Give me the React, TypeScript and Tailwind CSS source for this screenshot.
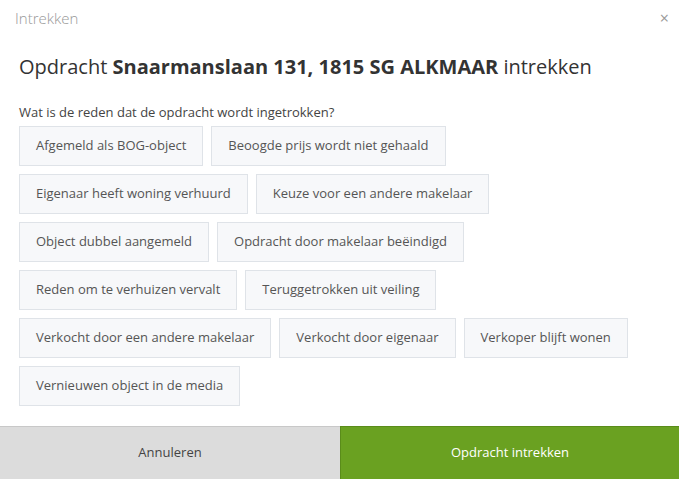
import React from "react";

const reasons = [
  "Afgemeld als BOG-object",
  "Beoogde prijs wordt niet gehaald",
  "Eigenaar heeft woning verhuurd",
  "Keuze voor een andere makelaar",
  "Object dubbel aangemeld",
  "Opdracht door makelaar beëindigd",
  "Reden om te verhuizen vervalt",
  "Teruggetrokken uit veiling",
  "Verkocht door een andere makelaar",
  "Verkocht door eigenaar",
  "Verkoper blijft wonen",
  "Vernieuwen object in de media",
];

export default function App() {
  return (
    <div
      className="w-[679px] h-[479px] bg-white flex flex-col"
      style={{ fontFamily: '"Open Sans", sans-serif' }}
    >
      <div className="flex items-center justify-between pl-[15px] pr-[10px] h-[36px]">
        <span className="text-[15px] text-[#999] font-light">Intrekken</span>
        <span className="text-[16px] text-[#999] leading-none">×</span>
      </div>
      <div className="flex-1 px-[19px]">
        <h1 className="text-[20px] text-[#333] mt-[16px] leading-[30px]">
          Opdracht <b className="font-bold">Snaarmanslaan 131, 1815 SG ALKMAAR</b> intrekken
        </h1>
        <p className="text-[13px] text-[#444] mt-[21px] leading-[18px]">
          Wat is de reden dat de opdracht wordt ingetrokken?
        </p>
        <div className="flex flex-wrap gap-[8px] mt-[5px]">
          {reasons.map((r) => (
            <div
              key={r}
              className="h-[40px] px-[16px] flex items-center bg-[#f7f8fa] border border-[#dfe3e8] text-[13px] text-[#555]"
            >
              {r}
            </div>
          ))}
        </div>
      </div>
      <div className="flex h-[53px]">
        <div className="w-[340px] bg-[#dcdcdc] border-t border-[#c8c8c8] flex items-center justify-center text-[13px] text-[#444]">
          Annuleren
        </div>
        <div className="flex-1 bg-[#6aa121] border-l border-t border-[#5a8c1a] flex items-center justify-center text-[13px] text-white">
          Opdracht intrekken
        </div>
      </div>
    </div>
  );
}
